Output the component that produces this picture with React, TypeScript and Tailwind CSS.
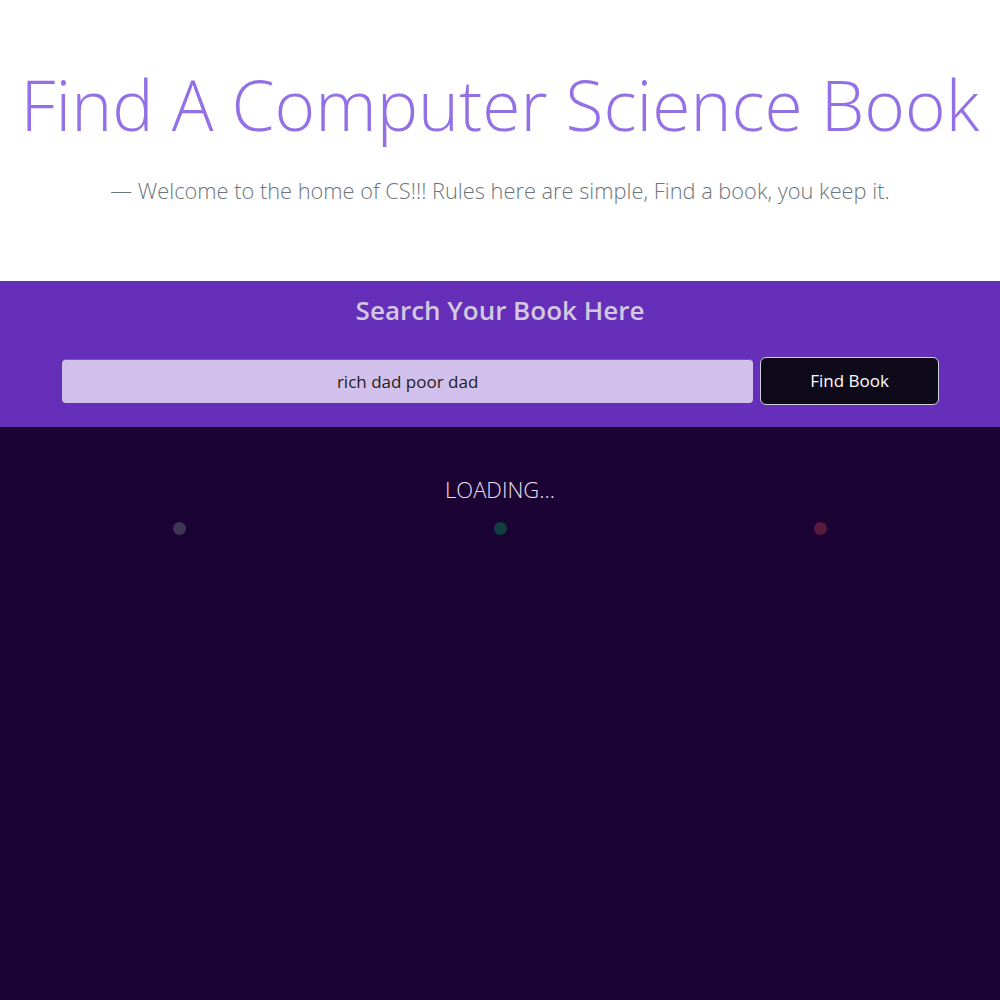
import React from "react";

export default function App() {
  return (
    <div className="min-h-[1000px] flex flex-col bg-[#1b0433]" style={{ fontFamily: '"Open Sans", "Noto Sans", sans-serif' }}>
      <header className="bg-white h-[281px] flex flex-col items-center">
        <h1 className="mt-[56px] text-[69.5px] leading-[96px] font-light text-[#9370e6] whitespace-nowrap">
          Find A Computer Science Book
        </h1>
        <p className="mt-[24px] text-[21.8px] leading-[30px] font-light text-[#6c757d] whitespace-nowrap">
          — Welcome to the home of CS!!! Rules here are simple, Find a book, you keep it.
        </p>
      </header>
      <section className="bg-[#652fb9] h-[146px] flex flex-col items-center">
        <h2 className="mt-[12px] text-[26px] leading-[34px] font-semibold text-[#d2c8e0]">Search Your Book Here</h2>
        <div className="mt-[30px] flex items-center gap-[7px] w-[877px] ml-[1px]">
          <input
            readOnly
            value="rich dad poor dad"
            className="w-[692px] h-[44px] rounded-[4px] bg-[#d2c0ec] text-center text-[17px] text-[#212121] border-t border-[#9a3fd0] outline-none"
          />
          <button className="w-[179px] h-[48px] rounded-[6px] bg-[#0f0a1a] border border-[#cfcfd6] text-white text-[17px]">
            Find Book
          </button>
        </div>
      </section>
      <main className="flex-1 flex flex-col items-center">
        <div className="mt-[47px] text-[22px] leading-[30px] font-light text-[#e6e0ee]">LOADING...</div>
        <div className="mt-[18px] w-[654px] flex justify-between">
          <span className="w-[13px] h-[13px] rounded-full bg-[#3f3656]" />
          <span className="w-[13px] h-[13px] rounded-full bg-[#123f42]" />
          <span className="w-[13px] h-[13px] rounded-full bg-[#5a1a40]" />
        </div>
      </main>
    </div>
  );
}
